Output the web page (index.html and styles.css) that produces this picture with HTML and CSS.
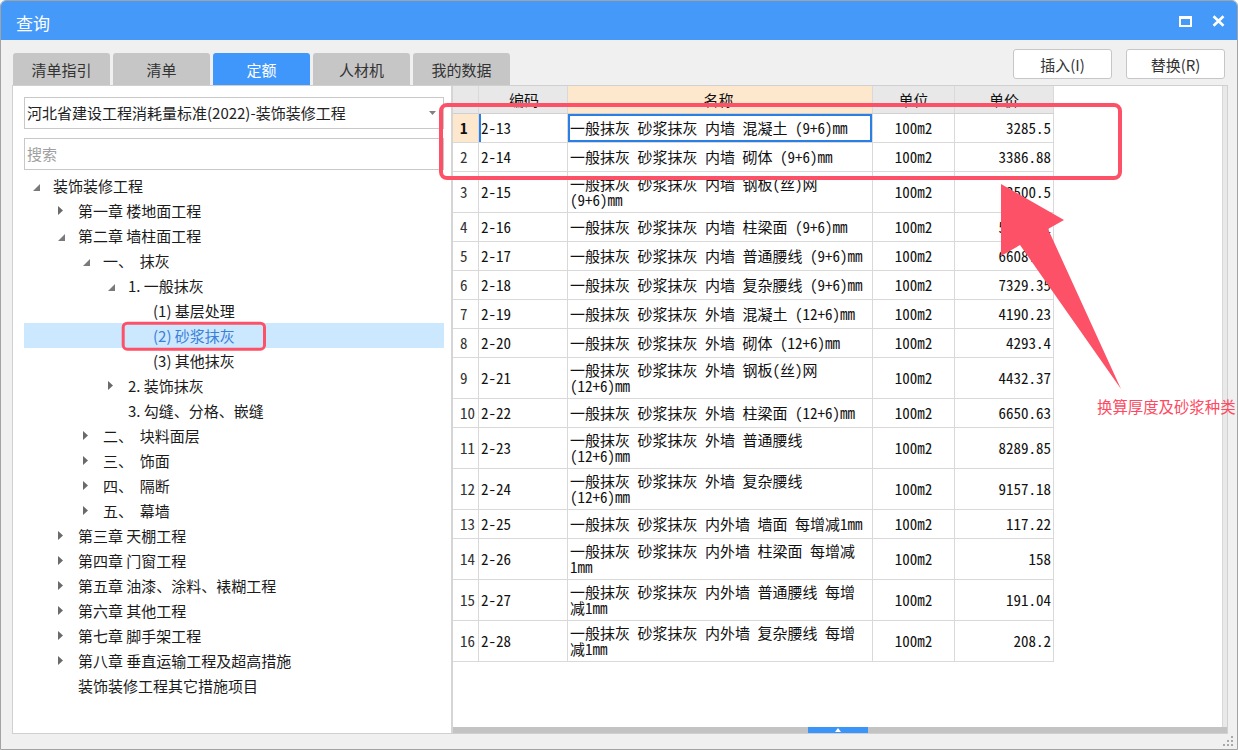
FILE: index.html
```html
<!DOCTYPE html>
<html lang="zh-CN">
<head>
<meta charset="utf-8">
<title>查询</title>
<link rel="stylesheet" href="styles.css">
</head>
<body>
<div class="window">
  <div class="titlebar">
    <span class="title">查询</span>
    <div class="tb-icons">
      <svg width="13" height="11" viewBox="0 0 13 11"><path d="M0 0h13v11H0z M2 3h9v6H2z" fill="#fff" fill-rule="evenodd"/></svg>
      <svg width="13" height="12" viewBox="0 0 13 12"><path d="M1.5 1.2L11.5 10.8M11.5 1.2L1.5 10.8" stroke="#fff" stroke-width="2.6"/></svg>
    </div>
  </div>

  <div class="toprow">
    <div class="tabs">
      <div class="tab">清单指引</div>
      <div class="tab">清单</div>
      <div class="tab active">定额</div>
      <div class="tab">人材机</div>
      <div class="tab">我的数据</div>
    </div>
    <div class="btns">
      <button class="btn">插入(I)</button>
      <button class="btn">替换(R)</button>
    </div>
  </div>

  <div class="panels">
    <div class="left">
      <div class="select">
        <span>河北省建设工程消耗量标准(2022)-装饰装修工程</span>
        <svg width="7" height="4" viewBox="0 0 7 4"><path d="M0 0h7L3.5 4z" fill="#808080"/></svg>
      </div>
      <div class="search">搜索</div>
      <ul class="tree">
        <li class="node l0"><span class="tw"><svg class="exp" width="7" height="7" viewBox="0 0 7 7"><path d="M7 0V7H0Z" fill="#7a7a7a"/></svg></span>装饰装修工程</li>
        <li class="node l1"><span class="tw"><svg width="5" height="9" viewBox="0 0 5 9"><path d="M0 0L5 4.5L0 9Z" fill="#6a6a6a"/></svg></span>第一章 楼地面工程</li>
        <li class="node l1"><span class="tw"><svg class="exp" width="7" height="7" viewBox="0 0 7 7"><path d="M7 0V7H0Z" fill="#7a7a7a"/></svg></span>第二章 墙柱面工程</li>
        <li class="node l2"><span class="tw"><svg class="exp" width="7" height="7" viewBox="0 0 7 7"><path d="M7 0V7H0Z" fill="#7a7a7a"/></svg></span>一、  抹灰</li>
        <li class="node l3"><span class="tw"><svg class="exp" width="7" height="7" viewBox="0 0 7 7"><path d="M7 0V7H0Z" fill="#7a7a7a"/></svg></span>1. 一般抹灰</li>
        <li class="node l4"><span class="tw"></span>(1) 基层处理</li>
        <li class="node l4 sel"><span class="tw"></span>(2) 砂浆抹灰</li>
        <li class="node l4"><span class="tw"></span>(3) 其他抹灰</li>
        <li class="node l3"><span class="tw"><svg width="5" height="9" viewBox="0 0 5 9"><path d="M0 0L5 4.5L0 9Z" fill="#6a6a6a"/></svg></span>2. 装饰抹灰</li>
        <li class="node l3"><span class="tw"></span>3. 勾缝、分格、嵌缝</li>
        <li class="node l2"><span class="tw"><svg width="5" height="9" viewBox="0 0 5 9"><path d="M0 0L5 4.5L0 9Z" fill="#6a6a6a"/></svg></span>二、  块料面层</li>
        <li class="node l2"><span class="tw"><svg width="5" height="9" viewBox="0 0 5 9"><path d="M0 0L5 4.5L0 9Z" fill="#6a6a6a"/></svg></span>三、  饰面</li>
        <li class="node l2"><span class="tw"><svg width="5" height="9" viewBox="0 0 5 9"><path d="M0 0L5 4.5L0 9Z" fill="#6a6a6a"/></svg></span>四、  隔断</li>
        <li class="node l2"><span class="tw"><svg width="5" height="9" viewBox="0 0 5 9"><path d="M0 0L5 4.5L0 9Z" fill="#6a6a6a"/></svg></span>五、  幕墙</li>
        <li class="node l1"><span class="tw"><svg width="5" height="9" viewBox="0 0 5 9"><path d="M0 0L5 4.5L0 9Z" fill="#6a6a6a"/></svg></span>第三章 天棚工程</li>
        <li class="node l1"><span class="tw"><svg width="5" height="9" viewBox="0 0 5 9"><path d="M0 0L5 4.5L0 9Z" fill="#6a6a6a"/></svg></span>第四章 门窗工程</li>
        <li class="node l1"><span class="tw"><svg width="5" height="9" viewBox="0 0 5 9"><path d="M0 0L5 4.5L0 9Z" fill="#6a6a6a"/></svg></span>第五章 油漆、涂料、裱糊工程</li>
        <li class="node l1"><span class="tw"><svg width="5" height="9" viewBox="0 0 5 9"><path d="M0 0L5 4.5L0 9Z" fill="#6a6a6a"/></svg></span>第六章 其他工程</li>
        <li class="node l1"><span class="tw"><svg width="5" height="9" viewBox="0 0 5 9"><path d="M0 0L5 4.5L0 9Z" fill="#6a6a6a"/></svg></span>第七章 脚手架工程</li>
        <li class="node l1"><span class="tw"><svg width="5" height="9" viewBox="0 0 5 9"><path d="M0 0L5 4.5L0 9Z" fill="#6a6a6a"/></svg></span>第八章 垂直运输工程及超高措施</li>
        <li class="node l1"><span class="tw"></span>装饰装修工程其它措施项目</li>
      </ul>
    </div>
    <div class="divider"></div>
    <div class="right">
      <div class="rmain">
        <div class="grid">
          <div class="row head">
            <div class="c c-n"></div>
            <div class="c c-code hc">编码</div>
            <div class="c c-name hc hsel">名称</div>
            <div class="c c-unit">单位</div>
            <div class="c c-price hc">单价</div>
          </div>
          <div class="row">
            <div class="c c-n cur">1</div>
            <div class="c c-code focus-l">2-13</div>
            <div class="c c-name focus">一般抹灰 砂浆抹灰 内墙 混凝土 (9+6)mm</div>
            <div class="c c-unit">100m2</div>
            <div class="c c-price">3285.5</div>
          </div>
          <div class="row">
            <div class="c c-n">2</div>
            <div class="c c-code">2-14</div>
            <div class="c c-name">一般抹灰 砂浆抹灰 内墙 砌体 (9+6)mm</div>
            <div class="c c-unit">100m2</div>
            <div class="c c-price">3386.88</div>
          </div>
          <div class="row tall">
            <div class="c c-n">3</div>
            <div class="c c-code">2-15</div>
            <div class="c c-name">一般抹灰 砂浆抹灰 内墙 钢板(丝)网 (9+6)mm</div>
            <div class="c c-unit">100m2</div>
            <div class="c c-price">3500.5</div>
          </div>
          <div class="row">
            <div class="c c-n">4</div>
            <div class="c c-code">2-16</div>
            <div class="c c-name">一般抹灰 砂浆抹灰 内墙 柱梁面 (9+6)mm</div>
            <div class="c c-unit">100m2</div>
            <div class="c c-price">5376.41</div>
          </div>
          <div class="row">
            <div class="c c-n">5</div>
            <div class="c c-code">2-17</div>
            <div class="c c-name">一般抹灰 砂浆抹灰 内墙 普通腰线 (9+6)mm</div>
            <div class="c c-unit">100m2</div>
            <div class="c c-price">6608.17</div>
          </div>
          <div class="row">
            <div class="c c-n">6</div>
            <div class="c c-code">2-18</div>
            <div class="c c-name">一般抹灰 砂浆抹灰 内墙 复杂腰线 (9+6)mm</div>
            <div class="c c-unit">100m2</div>
            <div class="c c-price">7329.35</div>
          </div>
          <div class="row">
            <div class="c c-n">7</div>
            <div class="c c-code">2-19</div>
            <div class="c c-name">一般抹灰 砂浆抹灰 外墙 混凝土 (12+6)mm</div>
            <div class="c c-unit">100m2</div>
            <div class="c c-price">4190.23</div>
          </div>
          <div class="row">
            <div class="c c-n">8</div>
            <div class="c c-code">2-20</div>
            <div class="c c-name">一般抹灰 砂浆抹灰 外墙 砌体 (12+6)mm</div>
            <div class="c c-unit">100m2</div>
            <div class="c c-price">4293.4</div>
          </div>
          <div class="row tall">
            <div class="c c-n">9</div>
            <div class="c c-code">2-21</div>
            <div class="c c-name">一般抹灰 砂浆抹灰 外墙 钢板(丝)网 (12+6)mm</div>
            <div class="c c-unit">100m2</div>
            <div class="c c-price">4432.37</div>
          </div>
          <div class="row">
            <div class="c c-n">10</div>
            <div class="c c-code">2-22</div>
            <div class="c c-name">一般抹灰 砂浆抹灰 外墙 柱梁面 (12+6)mm</div>
            <div class="c c-unit">100m2</div>
            <div class="c c-price">6650.63</div>
          </div>
          <div class="row tall">
            <div class="c c-n">11</div>
            <div class="c c-code">2-23</div>
            <div class="c c-name">一般抹灰 砂浆抹灰 外墙 普通腰线 (12+6)mm</div>
            <div class="c c-unit">100m2</div>
            <div class="c c-price">8289.85</div>
          </div>
          <div class="row tall">
            <div class="c c-n">12</div>
            <div class="c c-code">2-24</div>
            <div class="c c-name">一般抹灰 砂浆抹灰 外墙 复杂腰线 (12+6)mm</div>
            <div class="c c-unit">100m2</div>
            <div class="c c-price">9157.18</div>
          </div>
          <div class="row">
            <div class="c c-n">13</div>
            <div class="c c-code">2-25</div>
            <div class="c c-name">一般抹灰 砂浆抹灰 内外墙 墙面 每增减1mm</div>
            <div class="c c-unit">100m2</div>
            <div class="c c-price">117.22</div>
          </div>
          <div class="row tall">
            <div class="c c-n">14</div>
            <div class="c c-code">2-26</div>
            <div class="c c-name">一般抹灰 砂浆抹灰 内外墙 柱梁面 每增减1mm</div>
            <div class="c c-unit">100m2</div>
            <div class="c c-price">158</div>
          </div>
          <div class="row tall">
            <div class="c c-n">15</div>
            <div class="c c-code">2-27</div>
            <div class="c c-name">一般抹灰 砂浆抹灰 内外墙 普通腰线 每增减1mm</div>
            <div class="c c-unit">100m2</div>
            <div class="c c-price">191.04</div>
          </div>
          <div class="row tall">
            <div class="c c-n">16</div>
            <div class="c c-code">2-28</div>
            <div class="c c-name">一般抹灰 砂浆抹灰 内外墙 复杂腰线 每增减1mm</div>
            <div class="c c-unit">100m2</div>
            <div class="c c-price">208.2</div>
          </div>
        </div>
        <div class="vscroll"></div>
      </div>
      <div class="hscroll">
        <div class="thumb"><svg width="6" height="4" viewBox="0 0 6 4"><path d="M0 4L3 0L6 4Z" fill="#fff"/></svg></div>
      </div>
    </div>
  </div>

  <div class="statusbar">
    <svg class="grip" width="12" height="12" viewBox="0 0 12 12">
      <g fill="#a8a8a8">
        <rect x="9" y="1" width="2" height="2"/>
        <rect x="5" y="5" width="2" height="2"/><rect x="9" y="5" width="2" height="2"/>
        <rect x="1" y="9" width="2" height="2"/><rect x="5" y="9" width="2" height="2"/><rect x="9" y="9" width="2" height="2"/>
      </g>
    </svg>
  </div>

  <svg class="annot" width="1238" height="750" viewBox="0 0 1238 750">
    <rect x="441" y="105" width="679" height="73" rx="6" fill="none" stroke="#fd5167" stroke-width="4"/>
    <rect x="123.2" y="323.2" width="141.3" height="26" rx="4" fill="none" stroke="#fd5167" stroke-width="3"/>
    <polygon points="1001,184 1064,220 1048,229 1121,389 1020,245 1001,256" fill="#fd5167"/>
  </svg>
  <div class="annot-text">换算厚度及砂浆种类</div>
</div>
</body>
</html>
```

FILE: styles.css
```css
* { box-sizing: border-box; }

html, body {
  margin: 0;
  padding: 0;
  background: #ffffff;
}

body {
  width: 1238px;
  height: 750px;
  overflow: hidden;
  font-family: "Noto Sans CJK SC", "Microsoft YaHei", sans-serif;
}

.window {
  position: relative;
  width: 1238px;
  height: 750px;
  border: 1px solid #a3a3a3;
  border-radius: 6px 6px 0 0;
  background: #f0f0f0;
  display: flex;
  flex-direction: column;
  overflow: hidden;
}

/* title bar */
.titlebar {
  height: 39px;
  flex: none;
  background: #4499f9;
  display: flex;
  align-items: center;
  justify-content: space-between;
  padding: 0 12px 0 15px;
}

.title {
  color: #ffffff;
  font-size: 17px;
  line-height: 1;
  margin-top: 3px;
}

.tb-icons {
  display: flex;
  align-items: center;
  gap: 20px;
  margin-top: 1px;
}

/* tabs + buttons */
.toprow {
  height: 45px;
  flex: none;
  display: flex;
  justify-content: space-between;
  padding: 0 12px 0 12px;
}

.tabs {
  display: flex;
  gap: 3px;
  align-self: flex-end;
}

.tab {
  width: 97px;
  height: 32px;
  background: #c6c6c6;
  border-radius: 3px 3px 0 0;
  font-size: 15px;
  color: #333333;
  display: flex;
  align-items: center;
  justify-content: center;
}

.tab.active {
  background: #3f97fb;
  color: #ffffff;
}

.btns {
  display: flex;
  gap: 14px;
  padding-top: 9px;
}

.btn {
  width: 99px;
  height: 30px;
  background: #ffffff;
  border: 1px solid #c6c6c6;
  border-radius: 3px;
  font-family: "Noto Sans CJK SC", sans-serif;
  font-size: 15px;
  color: #333333;
  padding: 0;
}

/* panels */
.panels {
  height: 649px;
  flex: none;
  margin-left: 11px;
  width: 1216px;
  border: 1px solid #d0d0d0;
  display: flex;
  background: #ffffff;
}

.left {
  width: 438px;
  flex: none;
  background: #ffffff;
  padding: 11px 7px 0 11px;
}

.select {
  height: 32px;
  border: 1px solid #c8c8c8;
  display: flex;
  align-items: center;
  justify-content: space-between;
  padding: 0 7px 1px 2px;
  font-size: 15px;
  color: #222222;
}

.search {
  margin-top: 9px;
  height: 32px;
  border: 1px solid #c8c8c8;
  display: flex;
  align-items: center;
  padding: 0 0 1px 2px;
  font-size: 15px;
  color: #a0a0a0;
}

.tree {
  margin: 3px 0 0;
  padding: 0;
  list-style: none;
}

.node {
  height: 25px;
  display: flex;
  align-items: center;
  font-size: 15px;
  color: #1b1b1b;
  white-space: pre;
}

.node.sel {
  background: #cce8ff;
  color: #3b80d8;
}

.l0 { padding-left: 5px; }
.l1 { padding-left: 30px; }
.l2 { padding-left: 55px; }
.l3 { padding-left: 80px; }
.l4 { padding-left: 105px; }

.tw {
  width: 24px;
  height: 25px;
  flex: none;
  display: flex;
  align-items: center;
  padding-left: 4px;
}

.tw .exp {
  margin-top: 3px;
}

.divider {
  width: 2px;
  flex: none;
  background: #d5d5d5;
}

.right {
  flex: 1;
  min-width: 0;
  display: flex;
  flex-direction: column;
}

.rmain {
  flex: 1;
  min-height: 0;
  display: flex;
  background: #ffffff;
}

.grid {
  flex: 1;
}

.vscroll {
  width: 5px;
  flex: none;
  background: #e9e9e9;
  border-left: 1px solid #d8d8d8;
}

.hscroll {
  height: 6px;
  flex: none;
  background: #c3c3c3;
  display: flex;
}

.thumb {
  margin-left: 355px;
  width: 60px;
  height: 6px;
  background: #3b94f7;
  display: flex;
  align-items: center;
  justify-content: center;
}

/* table */
.row {
  display: flex;
  width: 601px;
  height: 29px;
  border-bottom: 1px solid #d9d9d9;
  font-family: "Noto Sans Mono CJK SC", "Noto Sans CJK SC", monospace;
  font-size: 15px;
  color: #111111;
}

.row.tall { height: 41px; }

.row.head {
  height: 28px;
  background: #e8e8e8;
  border-bottom-color: #d0d0d0;
}

.c {
  border-right: 1px solid #d9d9d9;
  display: flex;
  align-items: center;
  line-height: 16px;
}

.head .c { justify-content: center; }
.head .c-price { padding-right: 0; }
.head .hsel { background: #fde7cd; }

.c-n {
  width: 26px;
  padding-left: 7px;
  color: #333333;
}

.c-n.cur {
  background: #fde7cd;
  font-weight: bold;
  color: #111111;
}

.c-code {
  width: 89px;
  padding-left: 2px;
}

.c-name {
  width: 305px;
  padding: 0 5px 0 2px;
}

.c-unit {
  width: 82px;
  justify-content: center;
}

.c-price {
  width: 99px;
  justify-content: flex-end;
  padding-right: 2px;
}

.focus {
  box-shadow: inset 0 0 0 2px #2a7fe5;
}

.focus-l {
  box-shadow: inset 2px 0 0 #2a7fe5;
}

/* status bar */
.statusbar {
  height: 15px;
  flex: none;
  display: flex;
  justify-content: flex-end;
  align-items: flex-end;
  padding: 0 3px 2px 0;
}

/* annotations overlay */
.annot {
  position: absolute;
  left: -1px;
  top: -1px;
  pointer-events: none;
}

.annot-text {
  position: absolute;
  left: 1096px;
  top: 397px;
  font-size: 15.4px;
  line-height: 16px;
  color: #fe4a62;
  white-space: nowrap;
}
```
